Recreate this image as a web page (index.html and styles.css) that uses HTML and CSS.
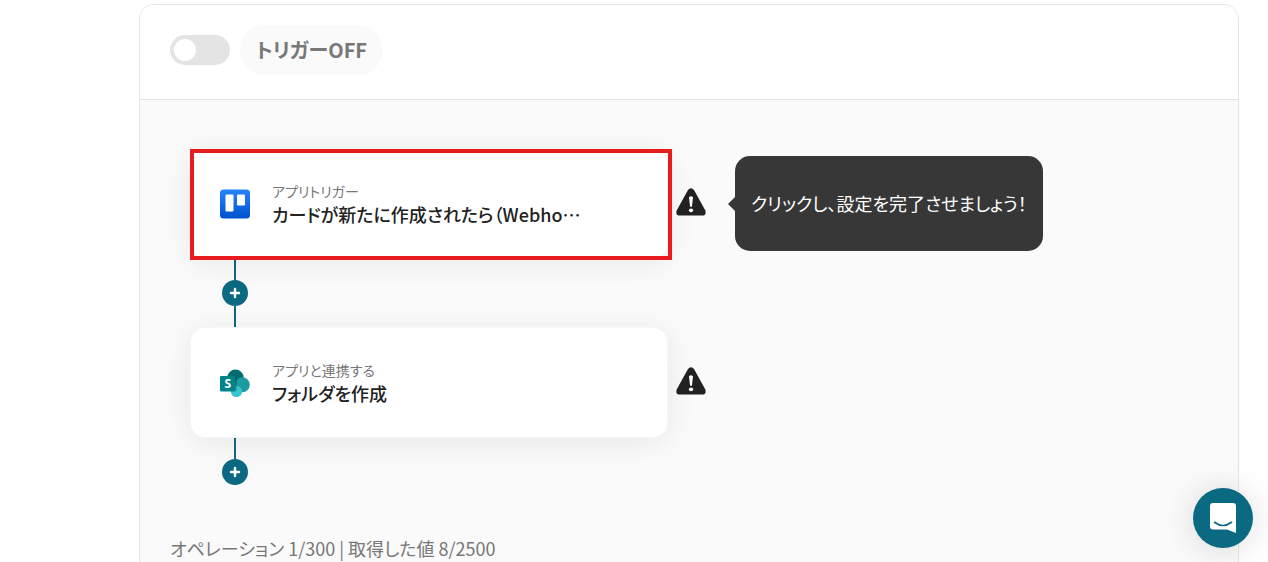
FILE: index.html
```html
<!DOCTYPE html>
<html lang="ja">
<head>
  <meta charset="UTF-8" />
  <meta name="viewport" content="width=device-width, initial-scale=1.0" />
  <title>フローボット</title>
  <link rel="stylesheet" href="styles.css">
</head>
<body>

  <main class="panel">
    <div class="panel-header">
      <input type="checkbox" class="toggle" id="trigger" />
      <label class="trigger-label" for="trigger">トリガーOFF</label>
    </div>

    <div class="canvas">
      <div class="step">
        <button type="button" class="card highlight">
          <svg class="app-icon" viewBox="0 0 30 30" aria-hidden="true">
            <defs>
              <linearGradient id="trello" x1="0" y1="0" x2="0" y2="1">
                <stop offset="0" stop-color="#2684ff" />
                <stop offset="1" stop-color="#0052cc" />
              </linearGradient>
            </defs>
            <rect x="0" y="0.5" width="30" height="29" rx="3.5" fill="url(#trello)" />
            <rect x="5.5" y="5.5" width="8" height="17" rx="1.2" fill="#fff" />
            <rect x="17" y="5.5" width="8" height="11" rx="1.2" fill="#fff" />
          </svg>
          <span class="card-text">
            <span class="card-type">アプリトリガー</span>
            <span class="card-title">カードが新たに作成されたら（Webho⋯</span>
          </span>
        </button>
        <svg class="warning" viewBox="0 0 30 28" role="img" aria-label="未設定">
          <path d="M12 2.1Q15-1.5 18 2.1L29.2 22.2Q30.8 27.5 26.5 27.5H3.5Q-.8 27.5.8 22.2Z" fill="#222" />
          <path d="M13 9.3Q15 7.3 17 9.3L16 18.2Q15 19.6 14 18.2Z" fill="#fff" />
          <ellipse cx="15" cy="22.3" rx="2.1" ry="1.9" fill="#fff" />
        </svg>
        <div class="tooltip" role="tooltip">クリックし、設定を完了させましょう！</div>
      </div>

      <div class="connector">
        <button type="button" class="add-button" aria-label="追加">
          <svg viewBox="0 0 26 26"><path d="M13 9v8M9 13h8" /></svg>
        </button>
      </div>

      <div class="step">
        <button type="button" class="card">
          <svg class="app-icon" viewBox="0 0 30 30" aria-hidden="true">
            <circle cx="15.5" cy="9.7" r="8.2" fill="#036c70" />
            <circle cx="22.3" cy="16.7" r="7.5" fill="#1a9ba1" />
            <circle cx="16.5" cy="23.5" r="5.6" fill="#37c6d0" />
            <path d="M8 8h8a1 1 0 0 1 1 1v13a1 1 0 0 1-1 1H8z" fill="#000" opacity=".2" />
            <rect x="0" y="8" width="15.5" height="15.5" rx="1.2" fill="#038387" />
            <text class="app-letter" x="7.8" y="20">S</text>
          </svg>
          <span class="card-text">
            <span class="card-type">アプリと連携する</span>
            <span class="card-title">フォルダを作成</span>
          </span>
        </button>
        <svg class="warning" viewBox="0 0 30 28" role="img" aria-label="未設定">
          <path d="M12 2.1Q15-1.5 18 2.1L29.2 22.2Q30.8 27.5 26.5 27.5H3.5Q-.8 27.5.8 22.2Z" fill="#222" />
          <path d="M13 9.3Q15 7.3 17 9.3L16 18.2Q15 19.6 14 18.2Z" fill="#fff" />
          <ellipse cx="15" cy="22.3" rx="2.1" ry="1.9" fill="#fff" />
        </svg>
      </div>

      <div class="connector last">
        <button type="button" class="add-button" aria-label="追加">
          <svg viewBox="0 0 26 26"><path d="M13 9v8M9 13h8" /></svg>
        </button>
      </div>
    </div>

    <p class="usage">オペレーション 1/300 | 取得した値 8/2500</p>
  </main>

  <button type="button" class="chat-button" aria-label="チャット">
    <svg viewBox="0 0 28 32">
      <path d="M4 1h20a3 3 0 0 1 3 3v27l-9-3.5H4a3 3 0 0 1-3-3V4a3 3 0 0 1 3-3z" fill="#fff" />
      <path d="M5.5 20.3Q14 26.7 22.5 20.3" fill="none" stroke="#0b6a82" stroke-width="1.7" stroke-linecap="round" />
    </svg>
  </button>

</body>
</html>
```
FILE: styles.css
```css
* {
  box-sizing: border-box;
}
body {
  margin: 0;
  height: 100vh;
  overflow: hidden;
  padding: 4px 29px 0 139px;
  font-family: 'Noto Sans CJK JP', sans-serif;
  font-feature-settings: "palt";
  background: #fff;
  color: #222;
}
button {
  font: inherit;
  font-feature-settings: inherit;
  color: inherit;
  border: none;
  padding: 0;
  cursor: pointer;
}
.panel {
  border: 1px solid #e4e4e4;
  border-radius: 15px;
  background: #fafafa;
  overflow: hidden;
}
.panel-header {
  display: flex;
  align-items: center;
  gap: 10px;
  padding: 20px 30px 24px;
  background: #fff;
  border-bottom: 1px solid #e4e4e4;
}
.toggle {
  appearance: none;
  display: flex;
  align-items: center;
  width: 60px;
  height: 30px;
  margin: 0;
  padding: 0 4px;
  border-radius: 15px;
  background: #e4e4e4;
  cursor: pointer;
}
.toggle::before {
  content: "";
  width: 22px;
  height: 22px;
  border-radius: 50%;
  background: #fff;
}
.toggle:checked {
  justify-content: flex-end;
  background: #0b6a82;
}
.trigger-label {
  padding: 0 16px;
  border-radius: 25px;
  background: #fafafa;
  color: #777;
  font-size: 20px;
  font-weight: 700;
  line-height: 50px;
}
.canvas {
  padding: 48px 50px 0;
}
.step {
  display: flex;
  align-items: center;
}
.card {
  position: relative;
  display: flex;
  align-items: center;
  gap: 22px;
  width: 478px;
  height: 111px;
  padding: 0 29px;
  border: 1px solid #f7f7f7;
  border-radius: 15px;
  background: #fff;
  text-align: left;
  box-shadow: 0 4px 30px rgba(0,0,0,0.08);
}
.highlight::after {
  content: "";
  position: absolute;
  inset: 0 -5px -2px -1px;
  border: 4px solid #e81c1c;
}
.app-icon {
  width: 30px;
  height: 30px;
}
.app-letter {
  fill: #fff;
  font-family: 'Open Sans', sans-serif;
  font-size: 12px;
  font-weight: 700;
  text-anchor: middle;
}
.card-text {
  display: flex;
  flex-direction: column;
}
.card-type {
  color: #777;
  font-size: 14px;
  line-height: 20px;
}
.card-title {
  font-size: 18px;
  font-weight: 500;
  line-height: 26px;
}
.warning {
  width: 30px;
  height: 28px;
  margin: 0 0 4px 8px;
}
.tooltip {
  position: relative;
  margin-left: 29px;
  padding: 32px 16px;
  border-radius: 15px;
  background: #373737;
  color: #fff;
  font-size: 18px;
  line-height: 31px;
}
.tooltip::before {
  content: "";
  position: absolute;
  top: 50%;
  right: 100%;
  margin-top: -7px;
  border: 7px solid transparent;
  border-right-color: #373737;
  border-left-width: 0;
}
.connector {
  display: flex;
  flex-direction: column;
  align-items: center;
  width: 26px;
  margin-left: 32px;
}
.connector::before,
.connector::after {
  content: "";
  width: 2px;
  height: 21px;
  background: #0b6a82;
}
.connector.last::after {
  display: none;
}
.add-button {
  width: 26px;
  height: 26px;
  border-radius: 50%;
  background: #0b6a82;
}
.add-button svg {
  display: block;
  stroke: #fff;
  stroke-width: 2.4;
  stroke-linecap: round;
}
.usage {
  margin: 0;
  padding: 48px 30px 60px;
  color: #777;
  font-size: 18px;
  line-height: 30px;
}
.chat-button {
  position: fixed;
  right: 15px;
  bottom: 14px;
  display: flex;
  align-items: center;
  justify-content: center;
  width: 60px;
  height: 60px;
  border-radius: 50%;
  background: #0b6a82;
  box-shadow: 0 2px 32px rgba(0,0,0,0.14);
}
.chat-button svg {
  width: 28px;
  height: 32px;
}
```
